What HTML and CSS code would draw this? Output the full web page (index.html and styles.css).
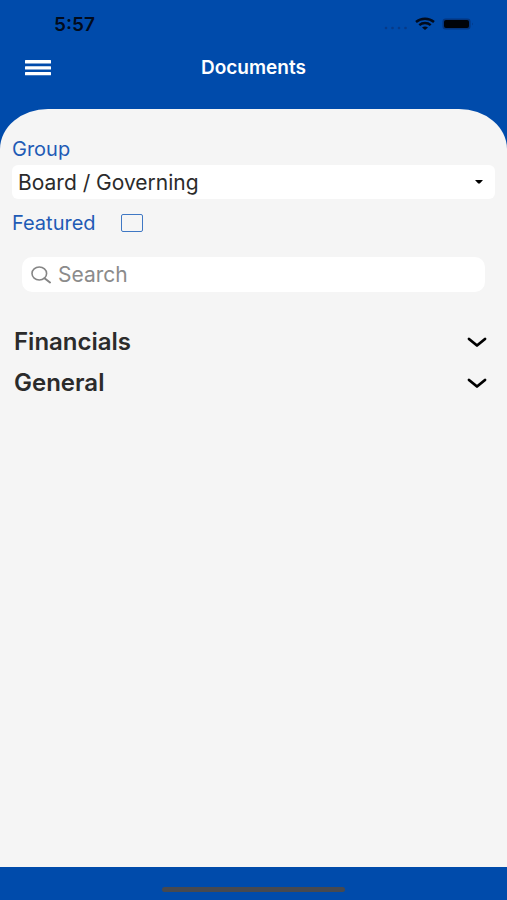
FILE: index.html
```html
<!DOCTYPE html>
<html lang="en">
<head>
<meta charset="utf-8">
<meta name="viewport" content="width=device-width, initial-scale=1">
<title>Documents</title>
<link rel="stylesheet" href="styles.css">
</head>
<body>
<div class="status">
  <span class="time">5:57</span>
  <div class="indicators">
    <svg width="24" height="14" viewBox="0 0 24 14" fill="#073a88" aria-hidden="true"><circle cx="2" cy="11" r="1.3"/><circle cx="8.500" cy="11" r="1.3"/><circle cx="15" cy="11" r="1.3"/><circle cx="21.500" cy="11" r="1.3"/></svg>
    <svg width="20" height="14" viewBox="0 0 20 14" fill="none" stroke="#020b1c" stroke-width="2.400" aria-hidden="true"><path d="M1 5C6 0.600 14 0.600 19 5M4.300 8.200C7.500 5.300 12.500 5.300 15.700 8.200"/><path d="M7 10.600Q10 8.200 13 10.600L10 13Z" fill="#020b1c" stroke="none"/></svg>
    <svg width="32" height="14" viewBox="0 0 32 14" aria-hidden="true"><rect x="0.500" y="1.500" width="28" height="11" rx="3" fill="#03357f"/><rect x="2" y="3" width="25" height="8" rx="2" fill="#000308"/><path d="M30 5.500v3q1.500-1.500 0-3" fill="#03357f"/></svg>
  </div>
</div>
<header class="header">
  <button class="menu" type="button" aria-label="Menu">
    <svg width="26" height="16" viewBox="0 0 26 16" fill="#fff" aria-hidden="true"><rect width="26" height="3.500" rx="0.500"/><rect y="6.200" width="26" height="3.300" rx="0.500"/><rect y="12" width="26" height="3.300" rx="0.500"/></svg>
  </button>
  <h1 class="title">Documents</h1>
</header>
<main class="sheet">
  <label class="label" for="group">Group</label>
  <div class="select-wrap">
    <select class="select" id="group"><option>Board / Governing</option></select>
    <svg class="caret" width="8" height="4" viewBox="0 0 8 4" aria-hidden="true"><path d="M0 0H8L4.800 3.600H3.200Z"/></svg>
  </div>
  <div class="featured">
    <label class="label" for="featured">Featured</label>
    <input class="check" type="checkbox" id="featured">
  </div>
  <div class="search">
    <svg width="20" height="18" viewBox="0 0 20 18" fill="none" stroke="#858585" stroke-width="1.600" stroke-linecap="round" aria-hidden="true"><ellipse cx="8.300" cy="7.500" rx="7.300" ry="6.500"/><path d="M13.500 12.200L19 16.500" stroke-width="2"/></svg>
    <input class="search-input" type="search" placeholder="Search" aria-label="Search">
  </div>
  <div class="sections">
    <button class="section" type="button">Financials
      <svg width="20" height="12" viewBox="0 0 20 12" fill="none" stroke="#000" stroke-width="2.800" stroke-linecap="round" stroke-linejoin="round" aria-hidden="true"><path d="M2 3L10 9.500L18 3"/></svg>
    </button>
    <button class="section" type="button">General
      <svg width="20" height="12" viewBox="0 0 20 12" fill="none" stroke="#000" stroke-width="2.800" stroke-linecap="round" stroke-linejoin="round" aria-hidden="true"><path d="M2 3L10 9.500L18 3"/></svg>
    </button>
  </div>
</main>
<footer class="footer"><div class="home-bar"></div></footer>
</body>
</html>
```
FILE: styles.css
```css
* {
  box-sizing: border-box;
}

body {
  margin: 0;
  min-height: 100vh;
  display: flex;
  flex-direction: column;
  background: #004bab;
  color: #2b2b2b;
  font-family: Inter, "Liberation Sans", sans-serif;
}

button,
input,
select {
  font-family: inherit;
  color: inherit;
}

.status {
  height: 48px;
  padding: 0 33px 0 54px;
  display: flex;
  align-items: center;
  justify-content: space-between;
}

.time {
  color: #020b1c;
  font-size: 19px;
  font-weight: 600;
}

.indicators {
  display: flex;
  align-items: center;
  gap: 7px;
}

.header {
  height: 61px;
  padding: 0 24px 22px;
  display: grid;
  grid-template-columns: 28px 1fr 28px;
  align-items: center;
}

.menu {
  display: flex;
  padding: 0;
  margin: 0;
  border: 0;
  background: none;
  justify-content: center;
}

.title {
  margin: 0;
  color: #fff;
  text-align: center;
  font-size: 19px;
  line-height: 24px;
  font-weight: 600;
}

.sheet {
  flex: 1;
  padding: 28px 12px 0;
  background: #f5f5f5;
  border-radius: 48px 48px 0 0 / 40px 40px 0 0;
}

.label {
  display: block;
  color: #1f5bb5;
  font-size: 20px;
  line-height: 24px;
}

.select-wrap {
  position: relative;
  margin-top: 4px;
}

.select {
  display: block;
  width: 100%;
  height: 34px;
  padding: 0 32px 0 6px;
  border: 0;
  border-radius: 6px;
  background: #fff;
  font-size: 21px;
  appearance: none;
}

.caret {
  position: absolute;
  right: 12px;
  top: 15px;
}

.featured {
  display: flex;
  align-items: center;
  gap: 25px;
  margin-top: 12px;
}

.check {
  appearance: none;
  width: 22px;
  height: 18px;
  margin: 0;
  border: 1px solid #3f78c4;
  border-radius: 2px;
}

.search {
  display: flex;
  align-items: center;
  gap: 7px;
  height: 35px;
  margin: 22px 10px 0;
  padding: 0 9px;
  border-radius: 10px;
  background: #fff;
}

.search-input {
  flex: 1;
  min-width: 0;
  padding: 0;
  border: 0;
  outline: 0;
  background: none;
  font-size: 21px;
}

.search-input::placeholder {
  color: #8b8b8b;
}

.sections {
  margin-top: 29px;
}

.section {
  display: flex;
  align-items: center;
  justify-content: space-between;
  width: 100%;
  height: 41px;
  padding: 0 8px 0 2px;
  border: 0;
  background: none;
  font-size: 24px;
  font-weight: 600;
  text-align: left;
}

.footer {
  height: 33px;
  padding-top: 20px;
}

.home-bar {
  width: 36%;
  height: 5px;
  margin: 0 auto;
  border-radius: 3px;
  background: #47494f;
}
```
